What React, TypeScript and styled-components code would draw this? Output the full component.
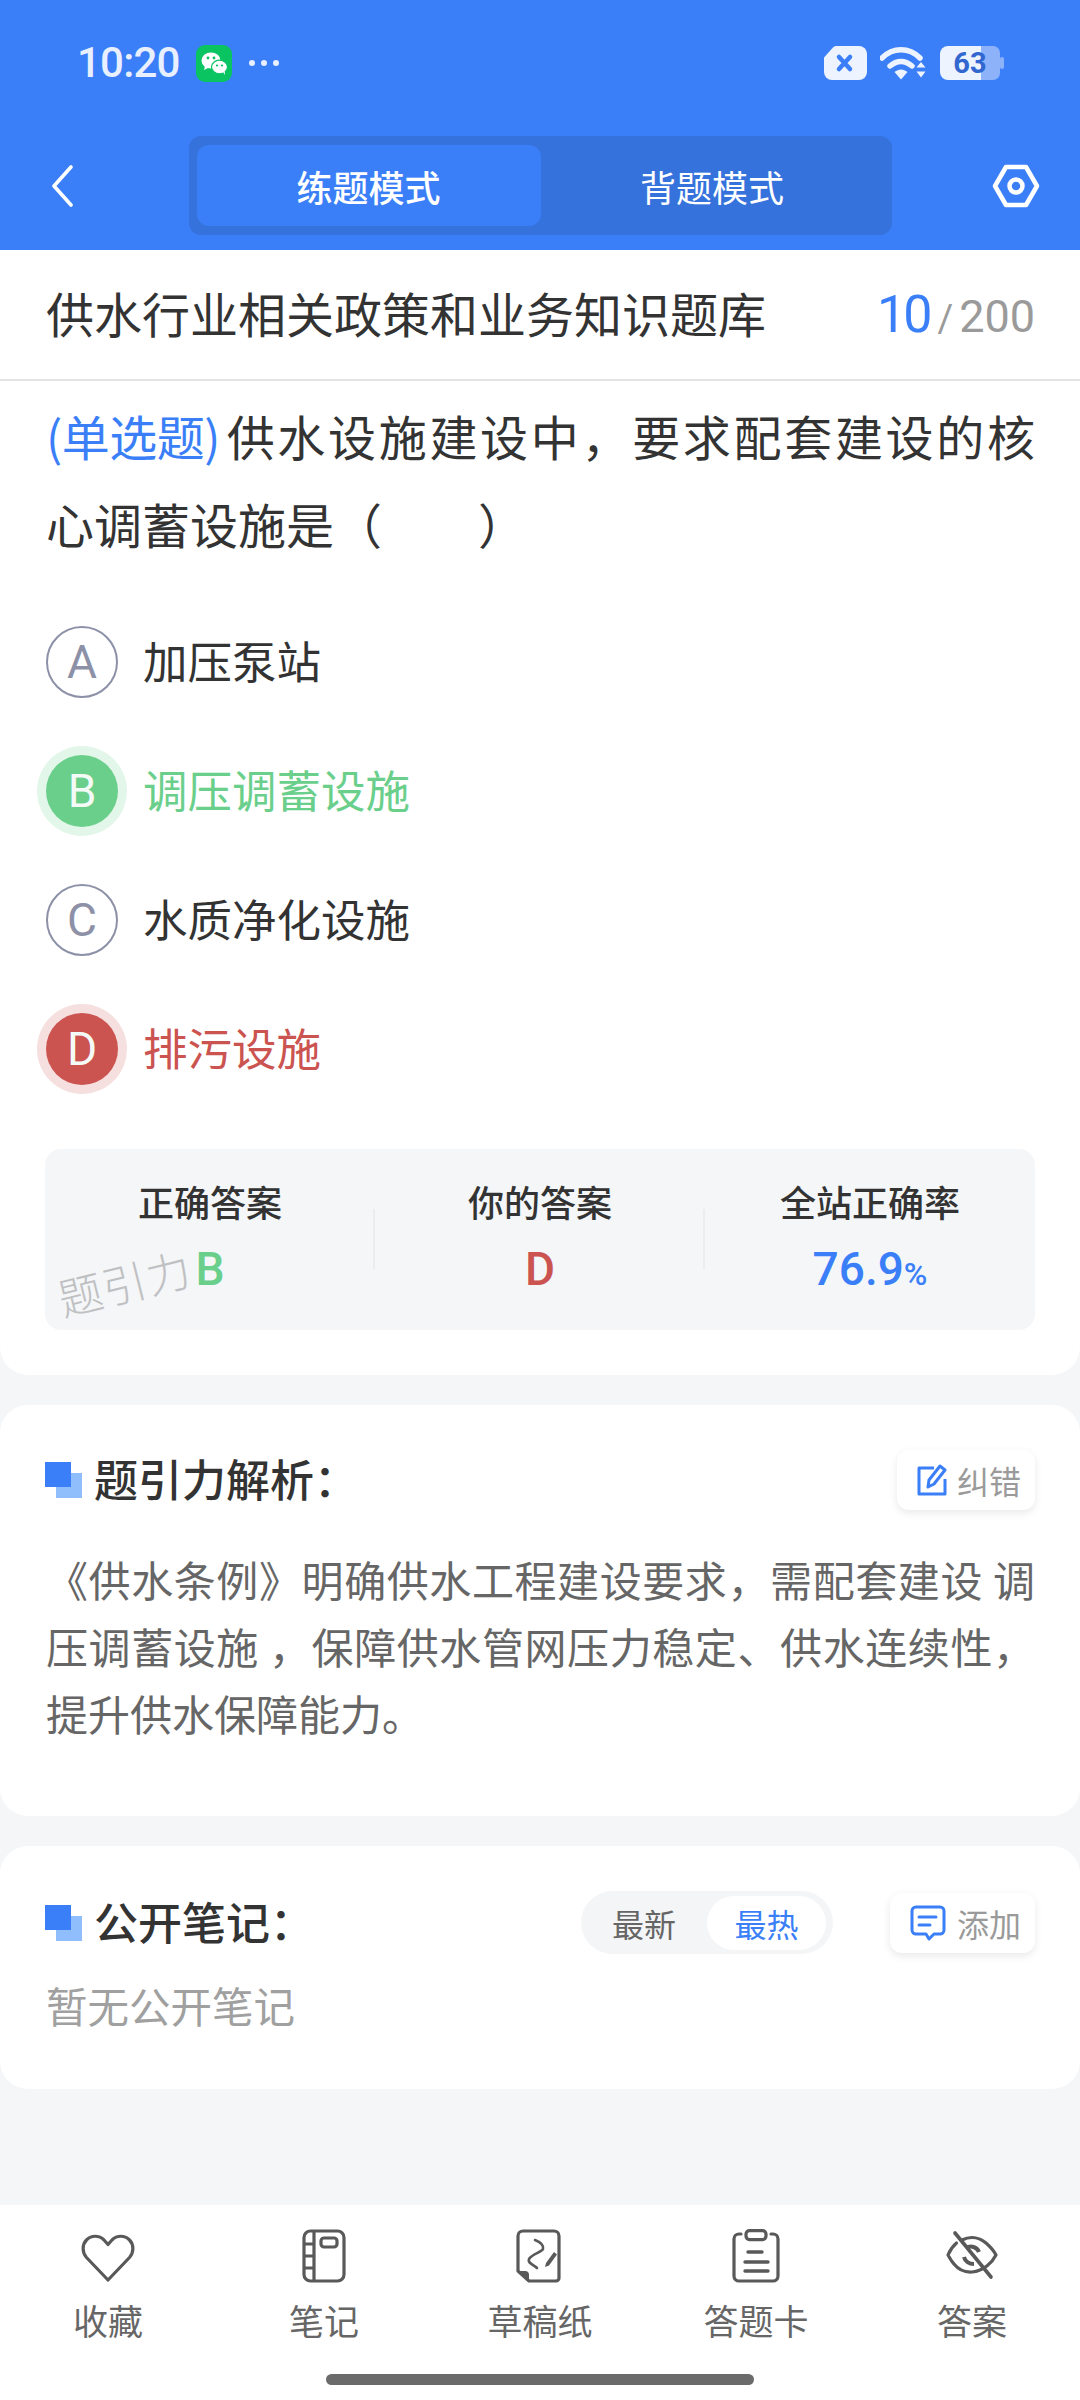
import styled, { createGlobalStyle } from 'styled-components';

const BLUE = '#3b7ff8';
const GREEN = '#6bcf8c';
const RED = '#cb5350';
const ICON_GREY = '#595959';

const GlobalStyle = createGlobalStyle`
  html, body {
    margin: 0;
    padding: 0;
    background: #f4f6f8;
  }
  * {
    box-sizing: border-box;
  }
`;

const Page = styled.div`
  width: 1080px;
  height: 2400px;
  display: flex;
  flex-direction: column;
  overflow: hidden;
  background: #f4f6f8;
  font-family: 'Noto Sans CJK SC', 'Noto Sans', sans-serif;
  color: #333;
`;

const Header = styled.header`
  height: 250px;
  background: ${BLUE};
  flex: none;
`;

const StatusBar = styled.div`
  height: 126px;
  padding: 0 76px 0 77px;
  display: flex;
  align-items: center;
  justify-content: space-between;
`;

const StatusGroup = styled.div<{ $gap: number }>`
  display: flex;
  align-items: center;
  gap: ${({ $gap }) => $gap}px;
`;

const Time = styled.span`
  font-family: Roboto, sans-serif;
  font-size: 42px;
  font-weight: 500;
  letter-spacing: -0.8px;
  color: #e8efff;
  line-height: 1;
`;

const NavBar = styled.div`
  margin-top: 10px;
  padding: 0 40px 0 51px;
  display: flex;
  align-items: center;
  justify-content: space-between;
`;

const ModeSwitch = styled.div`
  width: 703px;
  height: 99px;
  margin-left: 15px;
  padding: 9px 8px;
  display: grid;
  grid-template-columns: 344px 1fr;
  background: #3672dc;
  border-radius: 12px;
`;

const ModeTab = styled.div<{ $active?: boolean }>`
  display: flex;
  align-items: center;
  justify-content: center;
  border-radius: 12px;
  font-size: 36px;
  font-weight: ${({ $active }) => ($active ? 500 : 400)};
  color: #fff;
  background: ${({ $active }) => ($active ? BLUE : 'transparent')};
`;

const QuestionCard = styled.section`
  background: #fff;
  border-radius: 0 0 28px 28px;
  padding-bottom: 45px;
  flex: none;
`;

const TitleRow = styled.div`
  height: 131px;
  padding: 0 45px 0 46px;
  display: flex;
  align-items: center;
  justify-content: space-between;
  border-bottom: 2px solid #e3e3e3;
`;

const BankTitle = styled.h1`
  margin: 0 0 5px;
  font-size: 48px;
  font-weight: 400;
  line-height: 1;
  color: #333;
`;

const Counter = styled.div`
  display: flex;
  align-items: baseline;
  font-family: Roboto, sans-serif;
  color: #9a9a9a;
  font-size: 45px;
`;

const CounterCurrent = styled.span`
  font-size: 52px;
  color: ${BLUE};
  letter-spacing: -3px;
  margin-right: 8px;
`;

const CounterSlash = styled.span`
  font-size: 38px;
  margin-right: 6px;
`;

const Question = styled.div`
  margin-top: 10px;
  padding: 0 45px 3px 46px;
  font-size: 48px;
  line-height: 88px;
  color: #333;
`;

const QuestionLine = styled.div<{ $fill?: boolean }>`
  text-align: justify;
  text-align-last: ${({ $fill }) => ($fill ? 'justify' : 'left')};
  text-justify: inter-character;
`;

const QuestionType = styled.span`
  display: inline-block;
  letter-spacing: -0.5px;
  margin-right: 4px;
  color: ${BLUE};
`;

const OptionList = styled.div`
  margin-top: 27px;
  padding: 0 46px;
`;

const OptionRow = styled.div`
  height: 129px;
  display: flex;
  align-items: center;
  gap: 25px;
`;

const OptionBadge = styled.div<{ $state?: 'right' | 'wrong' }>`
  width: 72px;
  height: 72px;
  flex: none;
  border-radius: 50%;
  display: flex;
  align-items: center;
  justify-content: center;
  font-family: Roboto, sans-serif;
  font-size: 46px;
  font-weight: 400;
  color: ${({ $state }) => ($state ? '#f4faf6' : '#8d91a7')};
  border: ${({ $state }) => ($state ? 'none' : '2px solid #8d91a7')};
  background: ${({ $state }) =>
    $state === 'right' ? GREEN : $state === 'wrong' ? RED : 'transparent'};
  box-shadow: ${({ $state }) =>
    $state === 'right'
      ? '0 0 0 9px #e2f6e9'
      : $state === 'wrong'
        ? '0 0 0 9px #f5e0df'
        : 'none'};
`;

const OptionText = styled.span<{ $state?: 'right' | 'wrong' }>`
  font-size: 44.5px;
  padding-bottom: 5px;
  color: ${({ $state }) =>
    $state === 'right' ? GREEN : $state === 'wrong' ? RED : '#333'};
`;

const Stats = styled.div`
  position: relative;
  margin: 36px 45px 0;
  height: 181px;
  display: grid;
  grid-template-columns: repeat(3, 1fr);
  background: #f4f6f8;
  border-radius: 16px;
`;

const StatCell = styled.div<{ $divider?: boolean }>`
  position: relative;
  display: flex;
  flex-direction: column;
  align-items: center;
  padding-top: 28px;
  &::after {
    content: '';
    display: ${({ $divider }) => ($divider ? 'block' : 'none')};
    position: absolute;
    right: 0;
    top: 60px;
    width: 2px;
    height: 60px;
    background: #ebecee;
  }
`;

const StatLabel = styled.div`
  font-size: 36px;
  line-height: 48px;
  font-weight: 500;
  color: #333;
`;

const StatValue = styled.div<{ $color: string }>`
  margin-top: 17px;
  font-family: Roboto, sans-serif;
  font-size: 46px;
  line-height: 54px;
  font-weight: 500;
  color: ${({ $color }) => $color};
`;

const StatUnit = styled.span`
  font-size: 32px;
`;

const Watermark = styled.div`
  position: absolute;
  left: 7px;
  top: 122px;
  font-size: 44px;
  font-weight: 300;
  line-height: 56px;
  letter-spacing: 1px;
  color: #bfc0c2;
  transform: rotate(-14deg);
  transform-origin: left top;
`;

const Card = styled.section<{ $bottom: number }>`
  margin-top: 30px;
  padding: 45px 45px ${({ $bottom }) => $bottom}px 46px;
  background: #fff;
  border-radius: 28px;
  flex: none;
`;

const CardHeader = styled.div<{ $height: number }>`
  height: ${({ $height }) => $height}px;
  display: flex;
  align-items: center;
`;

const CardHeading = styled.div`
  display: flex;
  align-items: center;
  gap: 12px;
  flex: 1;
`;

const HeadingMark = styled.div`
  position: relative;
  width: 37px;
  height: 36px;
  margin-left: -1px;
  &::before {
    content: '';
    position: absolute;
    right: 0;
    bottom: 0;
    width: 26px;
    height: 25px;
    background: #90bdfb;
  }
  &::after {
    content: '';
    position: absolute;
    left: 0;
    top: 0;
    width: 26px;
    height: 25px;
    background: ${BLUE};
  }
`;

const CardTitle = styled.h2`
  margin: 0 0 4px;
  font-size: 44px;
  line-height: 60px;
  font-weight: 500;
  color: #333;
`;

const ActionButton = styled.div<{ $width: number }>`
  width: ${({ $width }) => $width}px;
  height: 60px;
  padding: 0 14px 0 20px;
  display: flex;
  align-items: center;
  justify-content: space-between;
  border-radius: 12px;
  background: #fff;
  box-shadow: 0 3px 9px rgba(0, 0, 0, 0.09);
  font-size: 32px;
  color: #9a9a9a;
`;

const SortToggle = styled.div`
  width: 252px;
  height: 63px;
  margin-right: 57px;
  padding: 5px 7px 4px 0;
  display: flex;
  border-radius: 32px;
  background: #f4f5f6;
`;

const SortOption = styled.div<{ $active?: boolean }>`
  display: flex;
  align-items: center;
  justify-content: center;
  flex: 0 0 ${({ $active }) => ($active ? 119 : 126)}px;
  border-radius: 27px;
  font-size: 32px;
  color: ${({ $active }) => ($active ? BLUE : '#666')};
  background: ${({ $active }) => ($active ? '#fff' : 'transparent')};
`;

const Analysis = styled.p`
  margin: 35px 0 0;
  font-size: 42px;
  line-height: 67px;
  color: #666;
  text-align: justify;
  text-justify: inter-character;
`;

const EmptyNote = styled.div`
  margin-top: 21px;
  font-size: 41.5px;
  line-height: 60px;
  color: #a0a0a0;
`;

const Spacer = styled.div`
  flex: 1;
`;

const BottomBar = styled.nav`
  height: 195px;
  flex: none;
  padding-top: 24px;
  background: #fff;
  display: flex;
  flex-direction: column;
  align-items: center;
`;

const BottomTabs = styled.div`
  width: 100%;
  display: grid;
  grid-template-columns: repeat(5, 1fr);
`;

const BottomTab = styled.div`
  display: flex;
  flex-direction: column;
  align-items: center;
  gap: 15px;
  font-size: 35px;
  line-height: 44px;
  color: #666;
`;

const HomeIndicator = styled.div`
  width: 428px;
  height: 11px;
  margin-top: 32px;
  border-radius: 6px;
  background: #6b6b6b;
`;

const Svg = styled.svg`
  display: block;
  flex: none;
`;

const WeChatIcon = () => (
  <Svg width="36" height="37" viewBox="0 0 36 37">
    <rect width="36" height="37" rx="9" fill="#0ac461" />
    <ellipse cx="15" cy="15.500" rx="9.500" ry="8" fill="#fff" />
    <path d="M9 21l-1 4 5-2.500z" fill="#fff" />
    <ellipse cx="23.500" cy="22" rx="8" ry="6.800" fill="#fff" stroke="#0ac461" strokeWidth="1.200" />
    <path d="M27 27l2 3-.4-4z" fill="#fff" />
    <circle cx="12" cy="13" r="1.400" fill="#0ac461" />
    <circle cx="18" cy="13" r="1.400" fill="#0ac461" />
    <circle cx="21" cy="20.500" r="1.100" fill="#0ac461" />
    <circle cx="26" cy="20.500" r="1.100" fill="#0ac461" />
  </Svg>
);

const MoreDots = () => (
  <Svg width="32" height="8" viewBox="0 0 32 8">
    <circle cx="4" cy="4" r="3" fill="#e8efff" />
    <circle cx="16" cy="4" r="3" fill="#e8efff" />
    <circle cx="28" cy="4" r="3" fill="#e8efff" />
  </Svg>
);

const MuteBox = () => (
  <Svg width="43" height="34" viewBox="0 0 43 34">
    <path
      d="M9 1.500C10 .5 11 0 12.500 0H35a8 8 0 0 1 8 8v18a8 8 0 0 1-8 8H8a8 8 0 0 1-8-8V11.500z"
      fill="#edf3ff"
    />
    <path d="M15 11l11 12M26 11L15 23" stroke={BLUE} strokeWidth="4.500" strokeLinecap="round" />
  </Svg>
);

const WifiIcon = () => (
  <Svg width="47" height="34" viewBox="0 0 47 34">
    <path d="M2 12C13 1 29 1 40 12" fill="none" stroke="#edf3ff" strokeWidth="5.500" strokeLinecap="round" />
    <path d="M10 20c7-6 15-6 22 0" fill="none" stroke="#edf3ff" strokeWidth="5.500" strokeLinecap="round" />
    <path d="M14.500 26c4-3.500 9-3.500 13 0l-6.500 7.500z" fill="#edf3ff" />
    <path d="M36.500 21.500h9l-4.500-5.500zM36.500 25.500h9l-4.500 6z" fill="#edf3ff" />
  </Svg>
);

const BatteryIcon = () => (
  <Svg width="64" height="34" viewBox="0 0 64 34">
    <path d="M36 0h17a7 7 0 0 1 7 7v20a7 7 0 0 1-7 7H36z" fill="#8db2fa" />
    <rect x="60" y="11" width="4" height="12" rx="2" fill="#8db2fa" />
    <path d="M8 0h33v34H8a8 8 0 0 1-8-8V8a8 8 0 0 1 8-8z" fill="#edf3ff" />
    <text
      x="30"
      y="27"
      textAnchor="middle"
      fontFamily="Roboto, sans-serif"
      fontWeight="700"
      fontSize="29"
      fill="#3267cf"
    >
      63
    </text>
  </Svg>
);

const BackIcon = () => (
  <Svg width="22" height="42" viewBox="0 0 22 42">
    <path d="M20 2L3 21l17 19" fill="none" stroke="#fff" strokeWidth="3.600" strokeLinecap="round" strokeLinejoin="round" />
  </Svg>
);

const SettingsIcon = () => (
  <Svg width="48" height="44" viewBox="0 0 48 44">
    <path
      d="M14 3h20l11 19-11 19H14L3 22z"
      fill="none"
      stroke="#fff"
      strokeWidth="4.500"
      strokeLinejoin="round"
    />
    <circle cx="24" cy="22" r="6.500" fill="none" stroke="#fff" strokeWidth="4.500" />
  </Svg>
);

const EditIcon = () => (
  <Svg width="32" height="32" viewBox="0 0 32 32">
    <path
      d="M17 4H2v26h26V15"
      fill="none"
      stroke={BLUE}
      strokeWidth="3"
      strokeLinejoin="round"
    />
    <path
      d="M12 16L23 2l5 4-11 14-6 3z"
      fill="none"
      stroke={BLUE}
      strokeWidth="3"
      strokeLinejoin="round"
    />
  </Svg>
);

const CommentIcon = () => (
  <Svg width="36" height="36" viewBox="0 0 36 36">
    <path
      d="M6 2h24a4 4 0 0 1 4 4v19a4 4 0 0 1-4 4h-6l-5 5-3-5H6a4 4 0 0 1-4-4V6a4 4 0 0 1 4-4z"
      fill="none"
      stroke={BLUE}
      strokeWidth="3"
      strokeLinejoin="round"
    />
    <path d="M9 12h17M9 20h11" stroke={BLUE} strokeWidth="3" strokeLinecap="round" />
  </Svg>
);

const TabIconFrame = ({ children }: { children: React.ReactNode }) => (
  <Svg width="60" height="54" viewBox="0 0 60 54" fill="none" stroke={ICON_GREY} strokeWidth="3.200">
    {children}
  </Svg>
);

const HeartIcon = () => (
  <TabIconFrame>
    <path
      d="M30 51L8.500 28.500C4 23.500 4 15.500 8.500 11 13.500 6 21 6 26 11l4 4.500 4-4.500c5-5 12.500-5 17.500 0 4.500 4.500 4.500 12.500 0 17.500z"
      strokeLinejoin="round"
    />
  </TabIconFrame>
);

const NotebookIcon = () => (
  <TabIconFrame>
    <rect x="10" y="2" width="40" height="50" rx="6.500" />
    <path d="M20 2v50M10 15h10M10 27h10M10 39h10" />
    <rect x="27" y="9" width="16" height="9" rx="3" />
  </TabIconFrame>
);

const DraftIcon = () => (
  <TabIconFrame>
    <path d="M13 2h31a5 5 0 0 1 5 5v42a3 3 0 0 1-3 3H19L8 42V7a5 5 0 0 1 5-5z" strokeLinejoin="round" />
    <path d="M8 42h7a4 4 0 0 1 4 4v6z" fill={ICON_GREY} stroke="none" />
    <path d="M25 11c5 2 9 5 8 9-1 3-11 5-14 10-2 4 5 6 8 9" strokeLinecap="round" strokeWidth="2.600" />
    <path d="M36 34l8-11 3 2.500-8 11-4 1.500z" fill={ICON_GREY} stroke="none" />
  </TabIconFrame>
);

const ClipboardIcon = () => (
  <TabIconFrame>
    <path d="M15 5h-2a5 5 0 0 0-5 5v37a5 5 0 0 0 5 5h34a5 5 0 0 0 5-5V10a5 5 0 0 0-5-5h-2" strokeLinecap="round" />
    <rect x="20" y="1.600" width="20" height="9" rx="3.500" />
    <path d="M22 23h14M19 33h23M19 42h23" strokeWidth="3.400" strokeLinecap="round" />
  </TabIconFrame>
);

const EyeOffIcon = () => (
  <TabIconFrame>
    <path d="M20 11c8-4 17-3 24 3 4 3.500 8 8 10 12-3.500 7-12 16-24 17-8 .5-14-3-18-8-2.500-2.500-4-5.500-6-9 2-5 5-9 8.500-12" strokeLinecap="round" strokeLinejoin="round" />
    <path d="M24 19c5-3 11-1 13 4M22 28c1 4 5 7 10 7" strokeWidth="4" />
    <path d="M13 4l36 44" strokeWidth="3.600" strokeLinecap="round" />
  </TabIconFrame>
);

const options = [
  { key: 'A', text: '加压泵站' },
  { key: 'B', text: '调压调蓄设施', state: 'right' as const },
  { key: 'C', text: '水质净化设施' },
  { key: 'D', text: '排污设施', state: 'wrong' as const },
];

const tabs = [
  { label: '收藏', icon: <HeartIcon /> },
  { label: '笔记', icon: <NotebookIcon /> },
  { label: '草稿纸', icon: <DraftIcon /> },
  { label: '答题卡', icon: <ClipboardIcon /> },
  { label: '答案', icon: <EyeOffIcon /> },
];

export default function App() {
  return (
    <Page>
      <GlobalStyle />
      <Header>
        <StatusBar>
          <StatusGroup $gap={16}>
            <Time>10:20</Time>
            <WeChatIcon />
            <MoreDots />
          </StatusGroup>
          <StatusGroup $gap={13}>
            <MuteBox />
            <WifiIcon />
            <BatteryIcon />
          </StatusGroup>
        </StatusBar>
        <NavBar>
          <BackIcon />
          <ModeSwitch>
            <ModeTab $active>练题模式</ModeTab>
            <ModeTab>背题模式</ModeTab>
          </ModeSwitch>
          <SettingsIcon />
        </NavBar>
      </Header>

      <QuestionCard>
        <TitleRow>
          <BankTitle>供水行业相关政策和业务知识题库</BankTitle>
          <Counter>
            <CounterCurrent>10</CounterCurrent>
            <CounterSlash>/</CounterSlash>
            200
          </Counter>
        </TitleRow>
        <Question>
          <QuestionLine $fill>
            <QuestionType>(单选题)</QuestionType>供水设施建设中，要求配套建设的核
          </QuestionLine>
          <QuestionLine>心调蓄设施是（　　）</QuestionLine>
        </Question>
        <OptionList>
          {options.map((option) => (
            <OptionRow key={option.key}>
              <OptionBadge $state={option.state}>{option.key}</OptionBadge>
              <OptionText $state={option.state}>{option.text}</OptionText>
            </OptionRow>
          ))}
        </OptionList>
        <Stats>
          <StatCell $divider>
            <StatLabel>正确答案</StatLabel>
            <StatValue $color={GREEN}>B</StatValue>
          </StatCell>
          <StatCell $divider>
            <StatLabel>你的答案</StatLabel>
            <StatValue $color={RED}>D</StatValue>
          </StatCell>
          <StatCell>
            <StatLabel>全站正确率</StatLabel>
            <StatValue $color={BLUE}>
              76.9<StatUnit>%</StatUnit>
            </StatValue>
          </StatCell>
          <Watermark>题引力</Watermark>
        </Stats>
      </QuestionCard>

      <Card $bottom={70}>
        <CardHeader $height={60}>
          <CardHeading>
            <HeadingMark />
            <CardTitle>题引力解析：</CardTitle>
          </CardHeading>
          <ActionButton $width={138}>
            <EditIcon />
            纠错
          </ActionButton>
        </CardHeader>
        <Analysis>
          《供水条例》明确供水工程建设要求，需配套建设 调压调蓄设施 ，保障供水管网压力稳定、供水连续性，提升供水保障能力。
        </Analysis>
      </Card>

      <Card $bottom={54}>
        <CardHeader $height={63}>
          <CardHeading>
            <HeadingMark />
            <CardTitle>公开笔记：</CardTitle>
          </CardHeading>
          <SortToggle>
            <SortOption>最新</SortOption>
            <SortOption $active>最热</SortOption>
          </SortToggle>
          <ActionButton $width={145}>
            <CommentIcon />
            添加
          </ActionButton>
        </CardHeader>
        <EmptyNote>暂无公开笔记</EmptyNote>
      </Card>

      <Spacer />

      <BottomBar>
        <BottomTabs>
          {tabs.map((tab) => (
            <BottomTab key={tab.label}>
              {tab.icon}
              {tab.label}
            </BottomTab>
          ))}
        </BottomTabs>
        <HomeIndicator />
      </BottomBar>
    </Page>
  );
}
